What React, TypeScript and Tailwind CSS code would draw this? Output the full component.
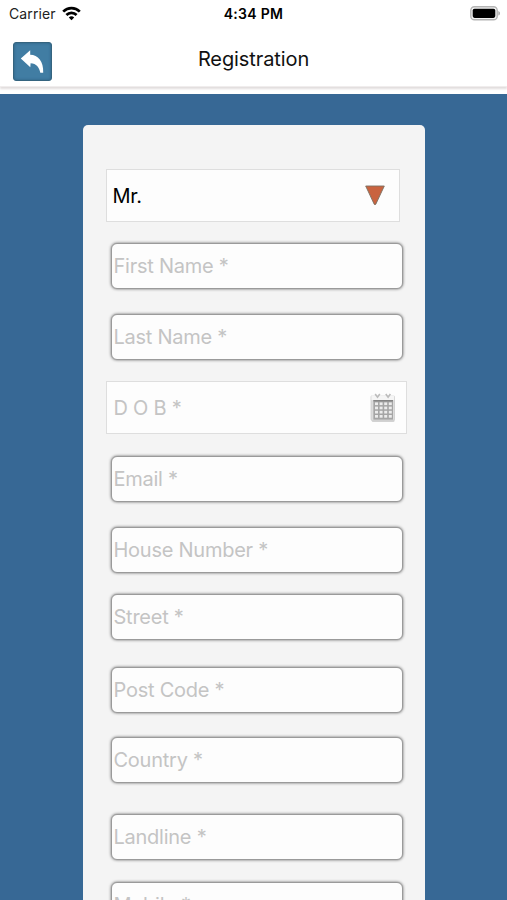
import React, { useState } from "react";

const FIELDS_TOP = [
  { name: "firstName", label: "First Name *", gap: "mt-[21px]" },
  { name: "lastName", label: "Last Name *", gap: "mt-[25px]" },
];

const FIELDS_BOTTOM = [
  { name: "email", label: "Email *", gap: "mt-[22px]" },
  { name: "houseNumber", label: "House Number *", gap: "mt-[25px]" },
  { name: "street", label: "Street *", gap: "mt-[21px]" },
  { name: "postCode", label: "Post Code *", gap: "mt-[27px]" },
  { name: "country", label: "Country *", gap: "mt-[24px]" },
  { name: "landline", label: "Landline *", gap: "mt-[31px]" },
  { name: "mobile", label: "Mobile *", gap: "mt-[22px]" },
];

function StatusBar() {
  return (
    <div className="grid h-[27px] grid-cols-3 items-center pl-[9px] pr-[6px] text-[#222]">
      <div className="flex items-center gap-[6px]">
        <span className="text-[14px] tracking-[0.1px]">Carrier</span>
        <svg width="19" height="15" viewBox="0 0 19 15" fill="none" stroke="#000" strokeWidth="2.7">
          <path d="M1.2 5.6C5.8 0.9 13.2 0.9 17.8 5.6" />
          <path d="M4.4 9C7.2 6.1 11.8 6.1 14.6 9" />
          <path d="M9.5 14.2L6.8 11.4C8.3 10 10.7 10 12.2 11.4Z" fill="#000" stroke="none" />
        </svg>
      </div>
      <span className="pr-[3px] text-center text-[14px] font-semibold tracking-[0.3px] text-black">4:34 PM</span>
      <div className="flex justify-end">
        <svg width="31" height="15" viewBox="0 0 31 15">
          <rect x="0.8" y="0.8" width="26.4" height="13" rx="3.6" fill="#f4f4f4" stroke="#b4b4b4" strokeWidth="1.4" />
          <rect x="2.7" y="2.7" width="22.6" height="9.2" rx="1.8" fill="#000" />
          <path d="M28.4 5C30.4 5.8 30.4 8.8 28.4 9.6Z" fill="#a5a5a5" />
        </svg>
      </div>
    </div>
  );
}

function BackButton() {
  return (
    <button
      aria-label="Back"
      className="flex h-[39px] w-[39px] items-center justify-center rounded-[3px] border border-[#35647f] bg-[#417da3] shadow-[inset_0_0_3px_#2c5f80]"
    >
      <svg width="37" height="37" viewBox="0 0 37 37" fill="#fff">
        <path d="M6.8 15.4L16.2 7.2V11.8C24 12 29.6 18 29.2 29.8H26.3C25.2 24.2 22.4 20.4 16.6 20.2L16.3 24.2Z" />
      </svg>
    </button>
  );
}

function CalendarIcon() {
  const cols = [6, 10.6, 15.2, 19.8];
  const rows = [10.4, 14.6, 18.8, 23];
  return (
    <svg width="28" height="32" viewBox="0 0 28 32" className="shrink-0">
      <rect x="2.6" y="5" width="23" height="25" rx="1.5" fill="#d2d2d2" />
      <rect x="2" y="3.5" width="23.5" height="25" rx="1.5" fill="#dcdcdc" stroke="#cecece" strokeWidth="0.8" />
      <rect x="2.4" y="3.2" width="22.8" height="5" fill="#f5f5f5" />
      <rect x="4.4" y="8.2" width="19.6" height="19.4" fill="#a5a5a5" />
      <rect x="4.4" y="8" width="19.6" height="1.4" fill="#858585" />
      {rows.map((y) =>
        cols.map((x) => <rect key={`${x}-${y}`} x={x} y={y} width="3" height="2.7" fill="#ececec" />)
      )}
      <path d="M6.2 2L8.5 5.2L10.8 2M16.8 2L19.1 5.2L21.4 2" fill="none" stroke="#bcbcbc" strokeWidth="1.6" />
    </svg>
  );
}

function TextField({ name, label, gap }: { name: string; label: string; gap: string }) {
  return (
    <input
      name={name}
      placeholder={label}
      className={`${gap} ml-[5px] block h-[46px] w-[292px] shrink-0 rounded-[6px] border border-[#9a9a9a] bg-[#fdfdfd] pl-[2px] text-[20px] tracking-[-0.25px] text-black shadow-[0_0_3px_#666] outline-none placeholder:text-[#c4c4c4]`}
    />
  );
}

export default function App() {
  const [title] = useState("Mr.");

  return (
    <div className="flex h-screen flex-col overflow-hidden bg-[#376895] font-[Inter,sans-serif]">
      <header className="h-[94px] shrink-0 bg-white">
        <StatusBar />
        <div className="grid h-[60px] grid-cols-[60px_1fr_60px] items-start border-b border-[#f0eded] pt-[15px] shadow-[0_2px_2px_#e2dddd]">
          <div className="pl-[13px]">
            <BackButton />
          </div>
          <h1 className="pt-[3px] text-center text-[20px] leading-[28px] tracking-[-0.1px] text-[#111]">Registration</h1>
        </div>
      </header>

      <main className="flex min-h-0 flex-1 justify-center pt-[31px]">
        <form className="flex w-[342px] flex-col rounded-t-[5px] bg-[#f4f4f4] pl-[23px] pt-11">
          <button
            type="button"
            className="flex h-[53px] w-[294px] shrink-0 items-center justify-between border border-[#dedede] bg-[#fdfdfd] pl-[6px] pr-[14px] text-[20px] tracking-[-0.25px] text-black"
          >
            <span className="pt-px">{title}</span>
            <svg width="20" height="21" viewBox="0 0 20 21">
              <path d="M0.7 1H19.3L10.8 19.2Q10 20.4 9.2 19.2Z" fill="#c9633f" stroke="#7b7062" strokeWidth="0.9" strokeLinejoin="round" />
            </svg>
          </button>

          {FIELDS_TOP.map((field) => (
            <TextField key={field.name} {...field} />
          ))}

          <div className="mt-[21px] flex h-[53px] w-[301px] shrink-0 items-center border border-[#dedede] bg-[#fdfdfd] pl-[7px] pr-[9px]">
            <input
              name="dob"
              placeholder="D O B *"
              className="w-full min-w-0 bg-transparent pt-px text-[20px] tracking-[-0.25px] text-black outline-none placeholder:text-[#c4c4c4]"
            />
            <CalendarIcon />
          </div>

          {FIELDS_BOTTOM.map((field) => (
            <TextField key={field.name} {...field} />
          ))}
        </form>
      </main>
    </div>
  );
}
